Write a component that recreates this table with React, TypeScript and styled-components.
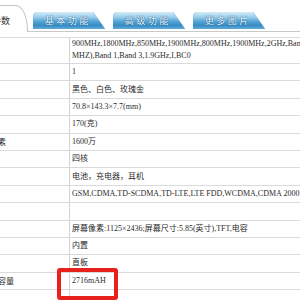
import styled, { createGlobalStyle } from 'styled-components';

const GlobalStyle = createGlobalStyle`
  html, body {
    margin: 0;
    padding: 0;
    background: #ffffff;
    overflow: hidden;
  }
  body {
    font-family: "Liberation Serif", "Noto Sans CJK SC", serif;
    color: #2b2b2b;
  }
`;

const Page = styled.div`
  width: 300px;
  height: 300px;
  overflow: hidden;
  background: #ffffff;
`;

const TabBar = styled.div`
  display: flex;
  align-items: flex-end;
  gap: 8px;
  height: 31px;
  border-bottom: 1px solid #c9c9c9;
  width: 480px;
`;

const ActiveTab = styled.div`
  box-sizing: border-box;
  margin-left: -14px;
  margin-right: -3px;
  width: 42px;
  height: 27px;
  margin-bottom: -1px;
  padding: 8px 0 0 5px;
  background: #ffffff;
  border: 1px solid #c4c4c4;
  border-bottom: none;
  border-top-right-radius: 12px 26px;
  font-size: 9px;
  color: #333;
`;

const TabShape = styled.div`
  filter: drop-shadow(0 0 0.6px #2f6f9e);
  margin-bottom: 2px;
`;

const Tab = styled.div`
  width: 72px;
  height: 17px;
  display: flex;
  align-items: center;
  padding-left: 12px;
  box-sizing: border-box;
  clip-path: polygon(3px 0, 60px 0, 72px 100%, 0 100%, 0 3px);
  background: linear-gradient(
    180deg,
    #d6ecf7 0%,
    #9fd0ec 28%,
    #56a5d6 55%,
    #378bc3 80%,
    #60addb 100%
  );
  font-family: "Noto Sans CJK SC", sans-serif;
  font-size: 9px;
  letter-spacing: 2.5px;
  color: #eef8fd;
  text-shadow: 0 0 1px #1f5f8e, 0 0 1px #1f5f8e;
`;

const SpecTable = styled.div`
  margin-top: 5px;
  margin-left: -20px;
  width: 500px;
  border-top: 1px solid #dadada;
`;

const Row = styled.div<{ $tall?: boolean }>`
  display: grid;
  grid-template-columns: 90px 1fr;
  box-sizing: border-box;
  height: ${p => (p.$tall ? '26px' : '17.4px')};
  border-bottom: 1px solid #dadada;
  font-size: 8px;
`;

const Label = styled.div`
  display: flex;
  align-items: center;
  padding-left: 2px;
  border-right: 1px solid #d2d2d2;
  white-space: nowrap;
`;

const Value = styled.div<{ $tall?: boolean }>`
  position: relative;
  display: flex;
  flex-direction: column;
  justify-content: ${p => (p.$tall ? 'flex-start' : 'center')};
  padding-left: 2px;
  line-height: ${p => (p.$tall ? '12px' : '16px')};
  white-space: nowrap;
`;

const Marker = styled.span`
  position: absolute;
  left: -13px;
  top: -5px;
  width: 61px;
  height: 32px;
  box-sizing: border-box;
  border: 4px solid #e8221b;
  border-radius: 3px;
`;

const tabs = ['基本功能', '高级功能', '更多图片'];

const specs = [
  { label: '卡数', value: '1' },
  { label: '颜色', value: '黑色、白色、玫瑰金' },
  { label: '尺寸', value: '70.8×143.3×7.7(mm)' },
  { label: '重量', value: '170(克)' },
  { label: '总像素', value: '1600万' },
  { label: '核数', value: '四核' },
  { label: '配件', value: '电池，充电器，耳机' },
  { label: '网络', value: 'GSM,CDMA,TD-SCDMA,TD-LTE,LTE FDD,WCDMA,CDMA 2000' },
  { label: '其他', value: '' },
  { label: '屏幕', value: '屏幕像素:1125×2436;屏幕尺寸:5.85(英寸),TFT,电容' },
  { label: '电池', value: '内置' },
  { label: '机型', value: '直板' },
  { label: '电池容量', value: '2716mAH', marked: true },
  { label: '系统', value: '' },
];

const App = () => (
  <Page>
    <GlobalStyle />
    <TabBar>
      <ActiveTab>参数</ActiveTab>
      {tabs.map(t => (
        <TabShape key={t}>
          <Tab>{t}</Tab>
        </TabShape>
      ))}
    </TabBar>

    <SpecTable>
      <Row $tall>
        <Label>频段</Label>
        <Value $tall>
          <span>900MHz,1800MHz,850MHz,1900MHz,800MHz,1900MHz,2GHz,Band 39(1.9GHz),Band 41(2.5</span>
          <span>MHZ),Band 1,Band 3,1.9GHz,I,BC0</span>
        </Value>
      </Row>
      {specs.map(s => (
        <Row key={s.label}>
          <Label>{s.label}</Label>
          <Value>
            {s.value}
            {s.marked && <Marker />}
          </Value>
        </Row>
      ))}
    </SpecTable>
  </Page>
);

export default App;
